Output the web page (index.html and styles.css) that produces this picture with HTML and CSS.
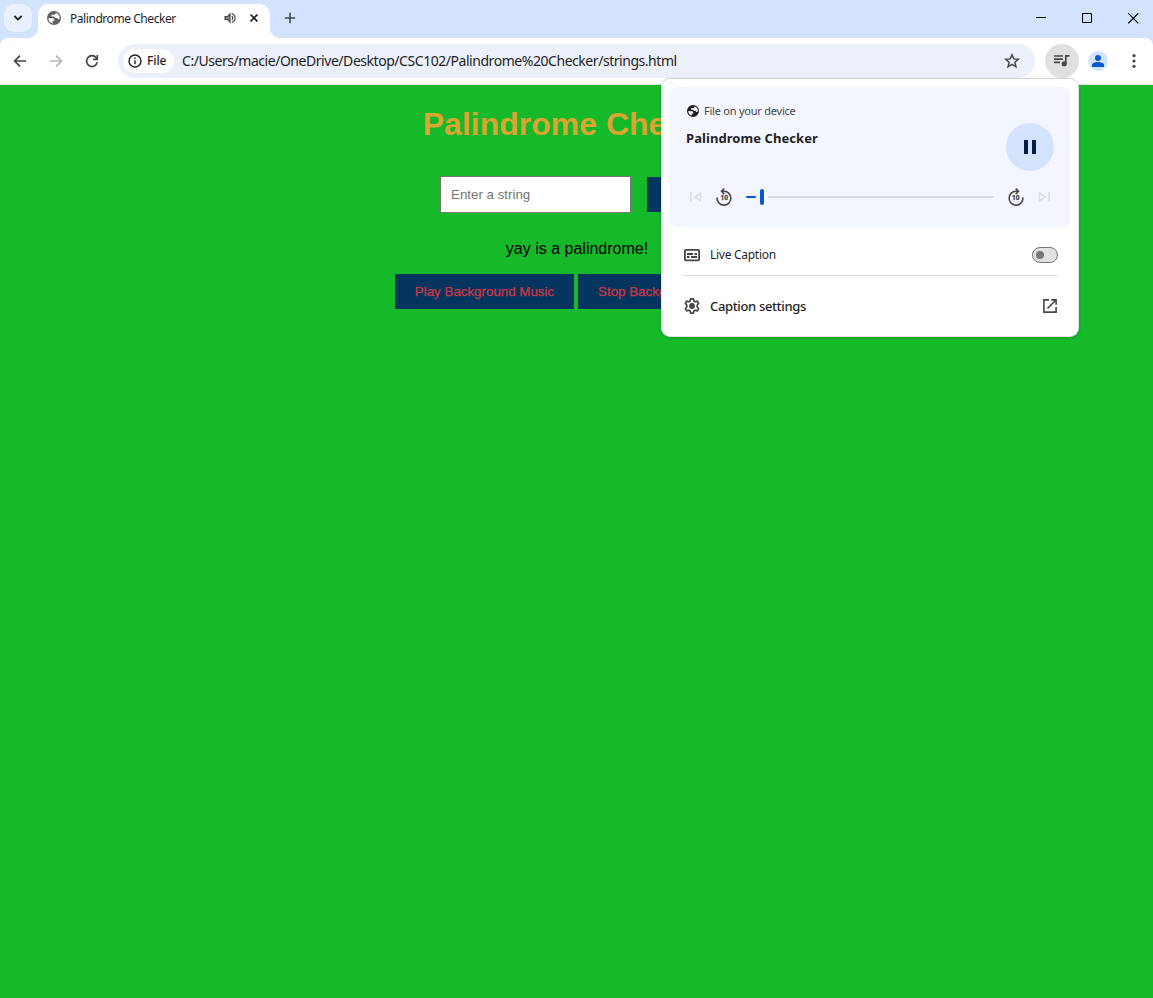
FILE: index.html
```html
<!DOCTYPE html>
<html lang="en">
<head>
<meta charset="utf-8">
<title>Palindrome Checker</title>
<link rel="stylesheet" href="styles.css">
</head>
<body>
<div class="window">
  <header class="tabstrip">
    <button class="tab-search" aria-label="Search tabs"><svg width="10" height="10" viewBox="0 0 10 10"><path d="M1.4 3l3.6 3.6L8.6 3" fill="none" stroke="#1f1f1f" stroke-width="1.8"/></svg></button>
    <div class="tab">
      <svg class="favicon" viewBox="2 2 20 20" fill="#5f6368"><path d="M12 2a10 10 0 1 0 0 20 10 10 0 0 0 0-20zM4 12.2l6 .1c2 0 2.500 1.100 2.500 2.200v1.500h-2.500v3.700A8 8 0 0 1 4 12.200zM14.500 4.400A8 8 0 0 1 20 12.800c-.6 1-1.700 1.200-2.500.3-.9-1-1.500-1.100-3.500-1.100-1.100 0-1.500-1-1.500-2H8.600V7.500h3.200c1.500 0 2.700-1.200 2.700-3.100z"/></svg>
      <span class="tab-title">Palindrome Checker</span>
      <svg class="audio" viewBox="0 0 24 24" fill="none" stroke="#474747" stroke-width="2"><path d="M3.500 9.500h4L12 5v14l-4.500-4.500h-4z" fill="#8a8a8a"/><path d="M15 8.500c2.300 1.700 2.300 5.300 0 7M15 4.500c7.500 2 7.500 13 0 15"/></svg>
      <svg class="close" viewBox="0 0 10 10"><path d="M1.500 1.500l7 7m0-7l-7 7" stroke="#1f1f1f" stroke-width="1.700"/></svg>
    </div>
    <svg class="new-tab" viewBox="0 0 12 12"><path d="M6 .8v10.400M.8 6h10.400" stroke="#474747" stroke-width="1.600"/></svg>
    <div class="window-controls">
      <svg viewBox="0 0 11 11"><path d="M0 4.500h10" stroke="#000"/></svg>
      <svg viewBox="0 0 11 11"><rect x=".5" y=".5" width="9" height="9" rx=".7" fill="none" stroke="#000" stroke-width="1.100"/></svg>
      <svg viewBox="0 0 11 11"><path d="M.3.3l10 10m0-10l-10 10" stroke="#000" stroke-width="1.100"/></svg>
    </div>
  </header>
  <nav class="toolbar">
    <svg class="nav-icon" viewBox="0 0 16 16" fill="none" stroke="#474747" stroke-width="1.700"><path d="M14 8H3M8 2.600L2.600 8 8 13.400"/></svg>
    <svg class="nav-icon" viewBox="0 0 16 16" fill="none" stroke="#b4b5b7" stroke-width="1.700"><path d="M2 8h11M8 2.600L13.400 8 8 13.400"/></svg>
    <svg class="nav-icon" viewBox="0 0 16 16" fill="none" stroke="#474747" stroke-width="1.700"><path d="M13.300 9.200A5.400 5.400 0 1 1 12.200 4.700L13.300 6"/><path d="M13.300 2v4.300H9"/></svg>
    <div class="omnibox">
      <div class="chip"><svg viewBox="0 0 14 14" fill="none" stroke="#1f1f1f" stroke-width="1.400"><circle cx="7" cy="7" r="6"/><path d="M7 6.200v4M7 3.600V5"/></svg><span>File</span></div>
      <span class="url">C:/Users/macie/OneDrive/Desktop/CSC102/Palindrome%20Checker/strings.html</span>
      <svg class="star" viewBox="0 0 16 16" fill="none" stroke="#474747" stroke-width="1.500"><path d="M8 1.800l1.800 4.100 4.500.4-3.400 3 1 4.400L8 11.400l-3.900 2.300 1-4.400-3.400-3 4.500-.4z"/></svg>
    </div>
    <div class="media-button"><svg viewBox="0 0 16 13" fill="none" stroke="#474747" stroke-width="1.700"><path d="M0 2h9M0 5.200h9M0 8.400h6M11.800 9.600V1.900h3.700"/><circle cx="10.200" cy="9.700" r="1.700" fill="#474747"/></svg></div>
    <div class="profile"><svg viewBox="0 0 12 12" fill="#0b57d0"><circle cx="6" cy="3" r="3"/><path d="M0 12V10c0-4 12-4 12 0v2z"/></svg></div>
    <svg class="menu" viewBox="0 0 4 14" fill="#474747"><circle cx="2" cy="1.700" r="1.600"/><circle cx="2" cy="7" r="1.600"/><circle cx="2" cy="12.300" r="1.600"/></svg>
  </nav>
  <main class="page">
    <h1>Palindrome Checker</h1>
    <div class="form-row"><input type="text" placeholder="Enter a string"><button class="action check" aria-label="Check"></button></div>
    <p class="result">yay is a palindrome!</p>
    <div class="music-row"><button class="action">Play Background Music</button><button class="action stop">Stop Background Music</button></div>
  </main>
  <section class="popup">
    <div class="media-card">
      <div class="source"><svg viewBox="2 2 20 20" fill="#1f1f1f"><path d="M12 2a10 10 0 1 0 0 20 10 10 0 0 0 0-20zM4 12.2l6 .1c2 0 2.500 1.100 2.500 2.200v1.500h-2.500v3.700A8 8 0 0 1 4 12.200zM14.500 4.400A8 8 0 0 1 20 12.800c-.6 1-1.700 1.200-2.500.3-.9-1-1.500-1.100-3.500-1.100-1.100 0-1.500-1-1.500-2H8.600V7.500h3.200c1.500 0 2.700-1.200 2.700-3.100z"/></svg><span>File on your device</span></div>
      <div class="media-main">
        <strong>Palindrome Checker</strong>
        <div class="pause"><svg viewBox="0 0 12 14" fill="#041e49"><path d="M0 0h4v14H0zM8 0h4v14H8z"/></svg></div>
      </div>
      <div class="controls">
        <svg class="skip" viewBox="0 0 12 12" fill="none" stroke="#d9dce2" stroke-width="1.500"><path d="M1 1v10M10.500 2.200v7.600L5 6z"/></svg>
        <svg class="seek" viewBox="0 0 18 18"><path d="M2.100 9.500A6.900 6.900 0 1 0 9 3.300H7M9.300.5L6.500 3.300l2.800 2.800" fill="none" stroke="#474747" stroke-width="1.600"/><text x="9.300" y="12.200" text-anchor="middle">10</text></svg>
        <div class="slider"><i class="played"></i><i class="thumb"></i><i class="track"></i></div>
        <svg class="seek" viewBox="0 0 18 18"><path d="M15.900 9.500A6.900 6.900 0 1 1 9 3.300h2M8.700.5l2.800 2.800-2.800 2.800" fill="none" stroke="#474747" stroke-width="1.600"/><text x="8.800" y="12.200" text-anchor="middle">10</text></svg>
        <svg class="skip" viewBox="0 0 12 12" fill="none" stroke="#d9dce2" stroke-width="1.500"><path d="M11 1v10M1.500 2.200v7.600L7 6z"/></svg>
      </div>
    </div>
    <div class="caption-row">
      <svg viewBox="0 0 16 16" fill="none" stroke="#474747" stroke-width="1.800"><rect x=".9" y="2.900" width="14.200" height="10.400" rx=".8"/><path d="M3 7h6M10.500 7H13M3 10h2.500M7 10h6"/></svg>
      <span class="live">Live Caption</span><span class="toggle"></span>
    </div>
    <div class="settings-row">
      <svg viewBox="0 0 16 16" fill="none" stroke="#474747" stroke-width="1.700" stroke-linejoin="round"><path d="M6.600.9h2.800l.4 2 1.500.9 2-.7 1.400 2.400L13.200 7v2l1.500 1.500-1.400 2.400-2-.7-1.500.9-.4 2H6.600l-.4-2-1.500-.9-2 .7-1.400-2.400L2.800 9V7L1.300 5.500l1.400-2.400 2 .7 1.500-.9z"/><circle cx="8" cy="8" r="2.100" fill="#474747"/></svg>
      <span class="settings">Caption settings</span>
      <svg class="external" viewBox="0 0 14 14" fill="none" stroke="#474747" stroke-width="1.600"><path d="M6 .9H.9v12.200h12.200V8M8.200.9h4.900v4.900M13 1L4.500 9.500"/></svg>
    </div>
  </section>
</div>
</body>
</html>
```

FILE: styles.css
```css
* { box-sizing: border-box; }
body { margin: 0; background: #15b92a; font-family: "Noto Sans", sans-serif; color: #1f1f1f; }
svg { display: block; flex: none; }
button { border: 0; padding: 0; }
.window { position: relative; height: 998px; overflow: hidden; display: flex; flex-direction: column; background: #d3e3fd; }
.tabstrip { height: 38px; display: flex; align-items: center; flex: none; padding: 0 14px 2px 4px; }
.tab-search { width: 28px; height: 28px; border-radius: 10px; background: #e9f0fe; display: grid; place-items: center; }
.tab { position: relative; width: 232px; height: 34px; align-self: flex-start; margin: 4px 0 0 6px; padding: 0 11px 6px 9px; background: #fff; border-radius: 10px 10px 0 0; display: flex; align-items: center; font-size: 12px; }
.tab::before, .tab::after { content: ""; position: absolute; bottom: 0; width: 10px; height: 10px; }
.tab::before { left: -10px; background: radial-gradient(circle at 0 0, transparent 9.6px, #fff 10.2px); }
.tab::after { right: -10px; background: radial-gradient(circle at 100% 0, transparent 9.6px, #fff 10.2px); }
.favicon { width: 14px; height: 14px; }
.tab-title { margin-left: 9px; white-space: nowrap; letter-spacing: -.44px; }
.audio { width: 14px; height: 14px; margin-left: auto; }
.close { width: 10px; height: 10px; margin-left: 12px; }
.new-tab { width: 12px; height: 12px; margin-left: 14px; }
.window-controls { display: flex; gap: 35px; margin-left: auto; }
.window-controls svg { width: 11px; height: 11px; }
.toolbar { height: 47px; flex: none; display: flex; align-items: center; padding: 0 17px 1px 12px; background: #fff; border-bottom: 1px solid #dfe1e5; border-radius: 8px 8px 0 0; }
.nav-icon { width: 16px; height: 16px; margin-right: 20px; }
.omnibox { width: 917px; height: 34px; margin-left: -2px; padding: 0 15px 0 5px; border-radius: 17px; background: #ebf0fa; display: flex; align-items: center; }
.chip { width: 51px; height: 24px; padding-left: 5px; border-radius: 12px; background: #fff; display: flex; align-items: center; font-size: 12px; font-weight: 500; letter-spacing: -.1px; }
.chip svg { width: 14px; height: 14px; margin-right: 5px; }
.url { margin-left: 8px; font-size: 14px; letter-spacing: -.455px; white-space: nowrap; }
.star { width: 16px; height: 16px; margin-left: auto; }
.media-button { width: 34px; height: 34px; border-radius: 50%; background: #e0e0e0; margin-left: 10px; display: grid; place-items: center; }
.media-button svg { width: 16px; height: 13px; }
.profile { width: 20px; height: 20px; margin-left: 9px; border-radius: 50%; background: #d3e3fd; display: grid; place-items: center; }
.profile svg { width: 12px; height: 12px; }
.menu { width: 4px; height: 14px; margin-left: auto; }
.page { flex: 1; padding-left: 1px; background: #15b92a; text-align: center; font-family: "Liberation Sans", Arial, sans-serif; color: #000; }
.page h1 { margin: 21px 0 33px; padding-left: 1px; font-size: 32px; line-height: 37px; color: #daa530; }
.form-row { display: flex; align-items: center; justify-content: center; gap: 16px; height: 37px; margin-left: -1px; }
.form-row input { width: 191px; height: 37px; padding: 10px; border: 1px solid #767676; background: #fff; font: 13.333px "Liberation Sans", Arial, sans-serif; }
.form-row input::placeholder { color: #757575; }
.action { height: 35px; padding: 0 20px; background: #03355f; color: #cf3644; font: 13.333px "Liberation Sans", Arial, sans-serif; white-space: nowrap; -webkit-text-stroke: .25px #cf3644; }
.check { width: 66px; }
.result { margin: 26px 0 16px; font-size: 16px; line-height: 19px; }
.music-row { display: flex; justify-content: center; gap: 4px; }
.music-row .action { width: 179px; padding: 0; }
.music-row .stop { width: 181px; }
.popup { position: absolute; left: 661px; top: 78px; width: 418px; height: 259px; padding: 9px 9px 8px; border: 1px solid #dfe1e5; border-top-color: #d4d6da; border-radius: 9px; background: #fff; box-shadow: 0 1px 3px #0003; }
.media-card { width: 400px; height: 140px; margin-left: -1px; margin-top: -1px; padding: 15px 16px; border-radius: 7px; background: #f3f6fe; }
.source { height: 18px; display: flex; align-items: center; gap: 5px; padding-left: 1px; font-size: 11px; line-height: 14px; color: #474747; letter-spacing: -.23px; }
.source span { padding-bottom: 1px; }
.source svg { width: 12px; height: 12px; }
.media-main { display: flex; justify-content: space-between; height: 51px; margin-top: 3px; }
.media-main strong { font-size: 13px; line-height: 30px; letter-spacing: .07px; }
.pause { width: 48px; height: 48px; border-radius: 50%; background: #d3e3fd; display: grid; place-items: center; }
.pause svg { width: 12px; height: 14px; }
.controls { display: flex; align-items: center; height: 18px; margin-top: 14px; padding: 0 4px; }
.skip { width: 12px; height: 12px; }
.seek { width: 18px; height: 18px; margin: 0 13px; }
.seek text { font: bold 6.500px Roboto, sans-serif; fill: #474747; stroke: #474747; stroke-width: .3px; }
.slider { display: flex; align-items: center; width: 248px; }
.played { width: 10px; height: 2px; background: #0b57d0; border-radius: 1px; }
.thumb { width: 4px; height: 16px; margin: 0 4px; background: #0b57d0; border-radius: 2px; }
.track { flex: 1; height: 2px; background: #d9dce2; border-radius: 1px; }
.caption-row, .settings-row { display: flex; align-items: center; margin: 0 11px 0 12px; padding: 0 0 0 1px; }
.caption-row { height: 49px; padding-top: 8px; border-bottom: 1px solid #dae0ef; }
.caption-row svg, .settings-row svg { width: 16px; height: 16px; }
.caption-row span:nth-child(2), .settings { margin-left: 10px; }
.live { font-size: 12px; letter-spacing: -.28px; padding-bottom: 1px; }
.toggle { width: 26px; height: 16px; margin-left: auto; border: 1px solid #747775; border-radius: 8px; background: #e1e3e1; display: flex; align-items: center; padding-left: 3px; }
.toggle::before { content: ""; width: 8px; height: 8px; border-radius: 50%; background: #747775; }
.settings-row { height: 60px; }
.settings { font-size: 13px; font-weight: 500; letter-spacing: -.35px; }
.settings-row .external { width: 14px; height: 14px; margin-left: auto; margin-right: 1px; }
```
